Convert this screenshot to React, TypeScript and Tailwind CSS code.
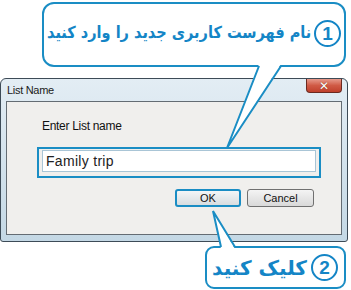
import React from "react";

const BLUE = "#1a8dc4";
const AR = '"DejaVu Sans", sans-serif';

export default function App() {
  return (
    <div className="relative w-[351px] h-[290px] bg-white overflow-hidden">
      <div className="flex flex-col">
        {/* Callout 1 */}
        <div className="ml-[42px] mt-[2px] w-[304px] h-[65px] border-2 border-[#1a8dc4] rounded-[12px] bg-white flex items-center justify-end pr-[3px] pb-[2px] gap-[3px] overflow-hidden">
          <span
            dir="rtl"
            className="inline-block shrink-0 origin-right scale-x-[0.88] text-[#1485c6] font-bold text-[16.5px] leading-none whitespace-nowrap"
            style={{ fontFamily: AR }}
          >
            نام فهرست کاربری جدید را وارد کنید
          </span>
          <span className="shrink-0 w-[27px] h-[27px] rounded-full border-2 border-[#1485c6] flex items-center justify-center text-[#1485c6] font-bold text-[19px] leading-none" style={{ fontFamily: '"Liberation Sans", sans-serif' }}>
            1
          </span>
        </div>

        {/* Dialog */}
        <div className="mt-[11px] w-[348px] h-[164px] border border-[#3d4b57] rounded-t-[6px] rounded-b-[3px] bg-gradient-to-b from-[#e3edf4] to-[#c4d8e5] flex flex-col px-[5px] pb-[6px]">
          <div className="h-[22px] flex items-start justify-between">
            <span className="text-[11px] text-[#1a1a1a] pl-[1px] pt-[3px] tracking-[-0.3px]" style={{ fontFamily: '"Liberation Sans", sans-serif' }}>
              List Name
            </span>
            <div className="w-[36px] h-[14px] rounded-b-[4px] border border-[#6b2a20] border-t-0 bg-gradient-to-b from-[#e69a8c] via-[#d05a45] to-[#c0402c] flex items-center justify-center">
              <span className="text-white font-bold text-[12px] leading-none" style={{ fontFamily: '"DejaVu Sans", sans-serif', textShadow: "0 0 1px #5a1a10" }}>
                ✕
              </span>
            </div>
          </div>
          <div className="flex-1 bg-[#f0efed] border border-[#646c73] flex flex-col" style={{ fontFamily: '"Liberation Sans", sans-serif' }}>
            <div className="pl-[35px] pt-[18px] text-[12px] text-[#111] leading-none tracking-[-0.3px]">Enter List name</div>
            <div className="ml-[30px] mt-[15px] w-[284px] h-[31px] border-2 border-[#1a8dc4] px-[3px] pt-[1px]">
              <div className="h-[22px] bg-white border border-[#a9c5d6] flex items-center pl-[3px] text-[14px] text-[#222] tracking-[0.3px]">
                Family trip
              </div>
            </div>
            <div className="flex ml-[168px] mt-[11px] gap-[6px]">
              <div className="w-[66px] h-[18px] border-2 border-[#1a8dc4] rounded-[3px] bg-gradient-to-b from-[#f4f6f7] to-[#d8dde0] flex items-center justify-center text-[11px] text-[#111]">
                OK
              </div>
              <div className="w-[67px] h-[18px] border border-[#707070] rounded-[3px] bg-gradient-to-b from-[#f4f4f4] to-[#d9d9d9] flex items-center justify-center text-[11px] text-[#111]">
                Cancel
              </div>
            </div>
          </div>
        </div>

        {/* Callout 2 */}
        <div className="ml-[205px] mt-[4px] w-[141px] h-[43px] border-2 border-[#1a8dc4] rounded-[9px] bg-white flex items-center justify-end pr-[6px] gap-[4px]">
          <span
            dir="rtl"
            className="text-[#1485c6] font-bold text-[20px] leading-none whitespace-nowrap"
            style={{ fontFamily: AR }}
          >
            کلیک کنید
          </span>
          <span className="shrink-0 w-[27px] h-[27px] rounded-full border-2 border-[#1485c6] flex items-center justify-center text-[#1485c6] font-bold text-[19px] leading-none" style={{ fontFamily: '"Liberation Sans", sans-serif' }}>
            2
          </span>
        </div>
      </div>

      {/* callout tails */}
      <svg className="absolute left-0 top-0 pointer-events-none" width="351" height="290">
        <polygon points="259,64 227,148 281,64" fill="white" />
        <polyline points="259,66 227,148 281,66" fill="none" stroke={BLUE} strokeWidth="2" strokeLinejoin="miter" />
        <polygon points="221,249 213,211 235,249" fill="white" />
        <polyline points="221,247 213,211 235,247" fill="none" stroke={BLUE} strokeWidth="2" />
      </svg>
    </div>
  );
}
